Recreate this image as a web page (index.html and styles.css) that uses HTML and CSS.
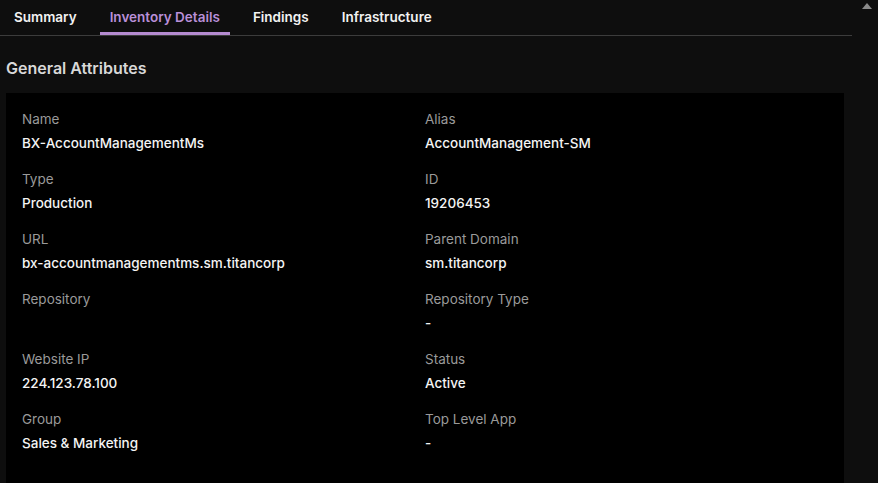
FILE: index.html
```html
<!DOCTYPE html>
<html>
<head>
<meta charset="utf-8">
<link rel="stylesheet" href="styles.css">
</head>
<body>
<div class="page">
  <div class="main">
    <nav class="tabs">
      <div class="tab">Summary</div>
      <div class="tab active">Inventory Details</div>
      <div class="tab">Findings</div>
      <div class="tab">Infrastructure</div>
    </nav>
    <h2 class="section-title">General Attributes</h2>
    <div class="panel">
      <div class="field"><div class="label">Name</div><div class="value">BX-AccountManagementMs</div></div>
      <div class="field"><div class="label">Alias</div><div class="value">AccountManagement-SM</div></div>
      <div class="field"><div class="label">Type</div><div class="value">Production</div></div>
      <div class="field"><div class="label">ID</div><div class="value">19206453</div></div>
      <div class="field"><div class="label">URL</div><div class="value">bx-accountmanagementms.sm.titancorp</div></div>
      <div class="field"><div class="label">Parent Domain</div><div class="value">sm.titancorp</div></div>
      <div class="field"><div class="label">Repository</div><div class="value"></div></div>
      <div class="field"><div class="label">Repository Type</div><div class="value">-</div></div>
      <div class="field"><div class="label">Website IP</div><div class="value">224.123.78.100</div></div>
      <div class="field"><div class="label">Status</div><div class="value">Active</div></div>
      <div class="field"><div class="label">Group</div><div class="value">Sales &amp; Marketing</div></div>
      <div class="field"><div class="label">Top Level App</div><div class="value">-</div></div>
    </div>
  </div>
  <div class="scrollbar">
    <svg class="arrow" width="10" height="6" viewBox="0 0 10 6"><path d="M5 0 L10 6 L0 6 Z" fill="#8a8a8a"/></svg>
  </div>
</div>
</body>
</html>
```
FILE: styles.css
```css
html, body {
  margin: 0;
  padding: 0;
  background: #0e0e0e;
  height: 100%;
  overflow: hidden;
}
body {
  font-family: Inter, "Noto Sans", sans-serif;
  color: #e6e6e6;
}
.page {
  display: flex;
  height: 483px;
}
.main {
  width: 852px;
  flex: none;
  display: flex;
  flex-direction: column;
}
.scrollbar {
  flex: 1;
  display: flex;
  justify-content: center;
  padding-top: 3px;
  background: #0e0e0e;
}
.arrow {
  display: block;
  margin-left: 3px;
}
.tabs {
  display: flex;
  height: 35px;
  border-bottom: 1px solid #3c3c3c;
  padding-left: 4px;
  box-sizing: content-box;
  flex: none;
}
.tab {
  padding: 0 10px;
  margin-right: 13px;
  font-size: 13.5px;
  font-weight: 600;
  line-height: 34px;
  color: #f2f2f2;
  border-bottom: 3px solid transparent;
  height: 32px;
  box-sizing: content-box;
}
.tab.active {
  color: #b98fd8;
  border-bottom-color: #b48bd0;
}
.section-title {
  margin: 0;
  padding: 22px 6px 0;
  font-size: 16px;
  font-weight: 600;
  line-height: 20px;
  color: #d8d8d8;
  flex: none;
}
.panel {
  margin: 15px 8px 0 6px;
  background: #000;
  padding: 16px 16px 20px;
  display: grid;
  grid-template-columns: 403px 403px;
  align-content: start;
  row-gap: 16px;
  flex: 1;
}
.field {
  display: flex;
  flex-direction: column;
  gap: 4px;
}
.label {
  font-size: 13.5px;
  line-height: 20px;
  color: #9a9a9a;
}
.value {
  font-size: 13.5px;
  line-height: 20px;
  font-weight: 500;
  color: #f4f4f4;
  min-height: 20px;
}
```
